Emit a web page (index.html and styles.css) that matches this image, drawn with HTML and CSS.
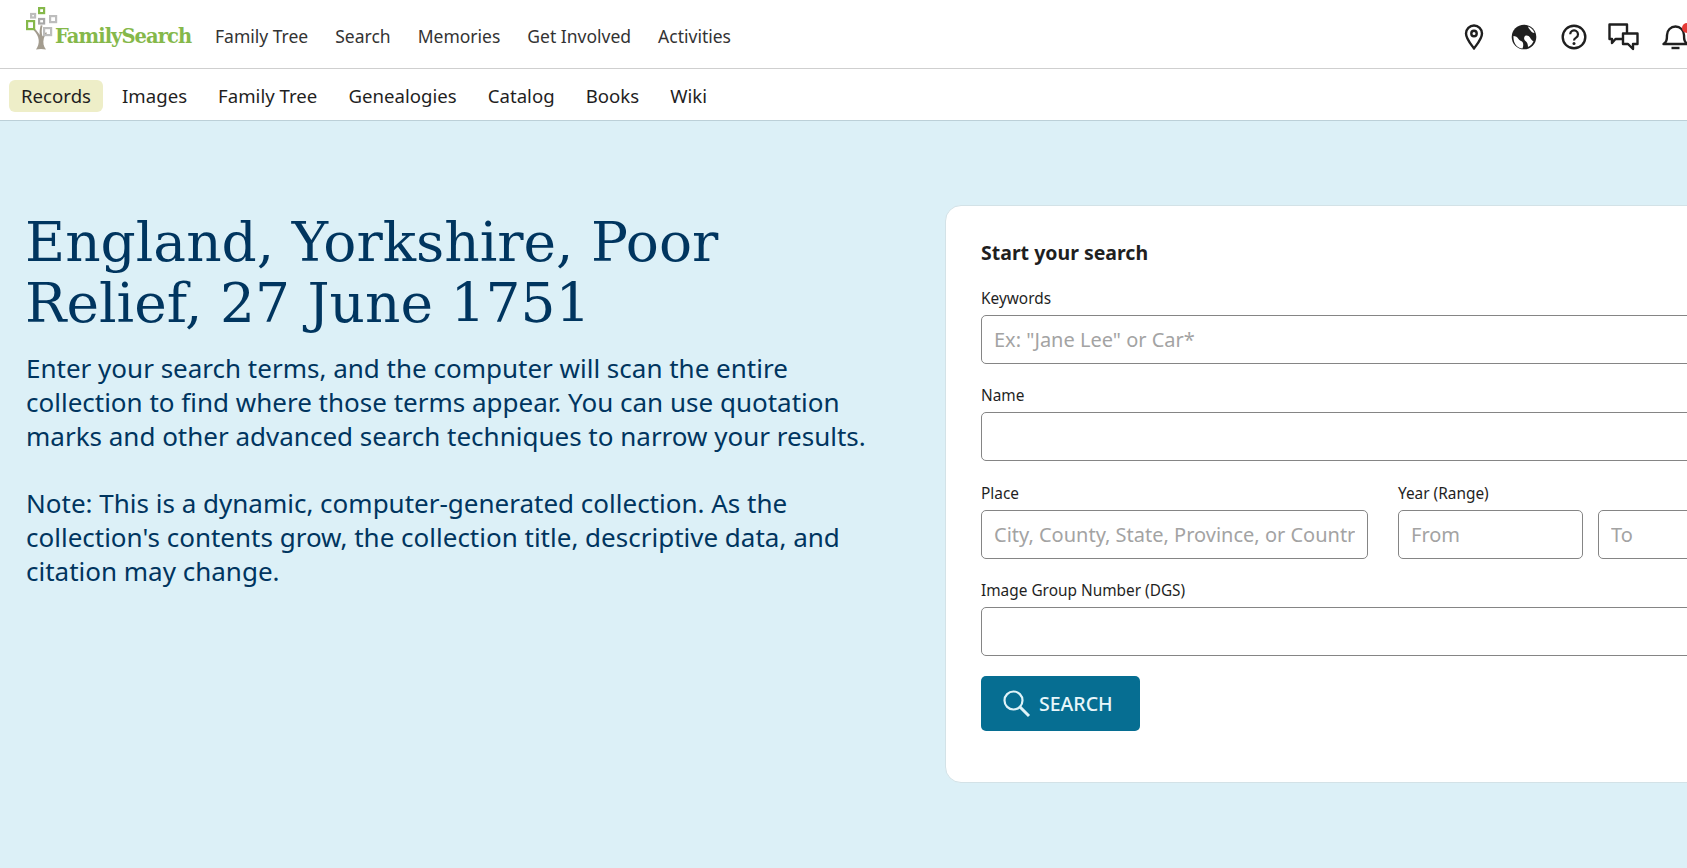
FILE: index.html
```html
<!DOCTYPE html>
<html lang="en">
<head>
<meta charset="utf-8">
<title>England, Yorkshire, Poor Relief, 27 June 1751</title>
<link rel="stylesheet" href="styles.css">
</head>
<body>
<div class="page">
<header class="top">
  <a class="logo">
    <svg class="logo-tree" width="40" height="50" viewBox="0 0 40 50">
      <path d="M11 48.500c3-.8 7-.8 10 0-2.500-3-3.200-7-2.200-11 .6-2.300 1.800-4 3.200-5.500l-1-.8c-1.600 1.300-2.800 2.600-3.600 4.300-.8-3.600-.9-7 .1-11l-1.800-.3c-1 3.600-1.300 6.500-1 9.800-1.300-2.300-3-4.500-5.200-6.500l-1.200 1.200c3.200 3.400 5 6.500 5.400 10.300.3 3.500-.7 6.500-2.700 9.500z" fill="#a39c8f"/>
      <g fill="none" stroke-width="2.200">
        <rect x="2.100" y="20.100" width="7" height="8" stroke="#85b84a"/>
        <rect x="14.100" y="7.100" width="5" height="5" stroke="#85b84a"/>
        <rect x="6.100" y="13" width="4" height="3.500" stroke="#bdbdbd"/>
        <rect x="14.100" y="18" width="5" height="4.500" stroke="#a8a8a8"/>
        <rect x="25.100" y="15.100" width="6" height="6" stroke="#bdbdbd"/>
        <rect x="19.100" y="27.100" width="7" height="7" stroke="#bdbdbd"/>
      </g>
    </svg>
    <span class="logo-text">FamilySearch</span>
  </a>
  <nav class="main-nav">
    <a>Family Tree</a><a>Search</a><a>Memories</a><a>Get Involved</a><a>Activities</a>
  </nav>
  <div class="icons">
    <svg width="28" height="28" viewBox="0 0 28 28" fill="none" stroke="#1f1f1f" stroke-width="2.400"><path d="M14 25.500C10 20 6 15.500 6 10.500a8 8 0 0 1 16 0c0 5-4 9.500-8 15z" stroke-linejoin="round"/><circle cx="14" cy="10.500" r="2.700"/></svg>
    <svg width="28" height="28" viewBox="0 0 28 28"><circle cx="14" cy="14" r="12.300" fill="#1f1f1f"/><path d="M3.500 13c2 0 4 1 5 3s3 1.500 4 3 1 4 0 6.500C7 25 3 20 3.500 13zM15 13c2-1 4 0 5 1.500s2 3.500 3.500 3.500c-1 3-3 5-5.500 6 0-3-1-5-2.500-6s-2-3.500-.5-5zM18 3.500c3 1 5.500 3.500 6.500 6.500-2 0-3-1-4-2.500s-2-2-2.500-4z" fill="#fff"/></svg>
    <svg width="28" height="28" viewBox="0 0 28 28" fill="none" stroke="#1f1f1f" stroke-width="2.400"><circle cx="14" cy="14" r="11.300"/><path d="M10.200 11.300a3.900 3.900 0 1 1 5.900 3.300c-1.300.8-2.100 1.500-2.100 3" stroke-width="2.200"/><circle cx="14" cy="20.500" r="1.500" fill="#1f1f1f" stroke="none"/></svg>
    <svg class="chat" width="31" height="28" viewBox="0 0 31 28" fill="none" stroke="#1f1f1f" stroke-width="2.400" stroke-linejoin="round"><path d="M14 16H7.500L4 20v-4H1.500V1.500H19V10"/><path d="M15 10.500h14.500V21H25v5l-5-5h-5z"/></svg>
    <span class="bell">
      <svg width="30" height="28" viewBox="0 0 30 28" fill="none" stroke="#1f1f1f" stroke-width="2.400" stroke-linejoin="round"><path d="M1.500 21c3-2 3.500-4 3.500-9a8.500 8.500 0 0 1 17 0c0 5 .5 7 3.500 9z"/><path d="M9.500 25h8"/></svg>
      <i class="dot"></i>
    </span>
  </div>
</header>
<nav class="sub-nav">
  <a class="active">Records</a><a>Images</a><a>Family Tree</a><a>Genealogies</a><a>Catalog</a><a>Books</a><a>Wiki</a>
</nav>
<main class="hero">
  <section class="intro">
    <h1>England, Yorkshire, Poor Relief, 27 June 1751</h1>
    <p>Enter your search terms, and the computer will scan the entire collection to find where those terms appear. You can use quotation marks and other advanced search techniques to narrow your results.</p>
    <p class="note">Note: This is a dynamic, computer-generated collection. As the collection's contents grow, the collection title, descriptive data, and citation may change.</p>
  </section>
  <form class="card">
    <h2>Start your search</h2>
    <label class="field">Keywords<input placeholder="Ex: &quot;Jane Lee&quot; or Car*"></label>
    <label class="field">Name<input></label>
    <div class="row">
      <label class="field place">Place<input placeholder="City, County, State, Province, or Country"></label>
      <div class="field years">
        <span>Year (Range)</span>
        <div class="year-inputs"><input placeholder="From"><input placeholder="To"></div>
      </div>
    </div>
    <label class="field">Image Group Number (DGS)<input></label>
    <button type="button" class="search">
      <svg width="30" height="30" viewBox="0 0 30 30" fill="none" stroke="#dff3f8" stroke-width="2.200"><circle cx="11.500" cy="11.500" r="9"/><path d="M18 18l9 9" stroke-width="3"/></svg>
      SEARCH
    </button>
  </form>
</main>
</div>
</body>
</html>
```
FILE: styles.css
```css
* { box-sizing: border-box; }
html, body { margin: 0; height: 100%; overflow: hidden; }
body { font-family: "Noto Sans", sans-serif; color: #1f1f1f; background: #fff; }
.page { width: 1840px; height: 868px; display: flex; flex-direction: column; }
.top { height: 69px; flex: none; display: flex; align-items: center; padding-left: 25px; border-bottom: 1px solid #cfcfcf; }
.logo { width: 190px; height: 50px; display: flex; flex: none; position: relative; margin-top: -17px; }
.logo-tree { position: absolute; left: 0; top: 0; }
.logo-text { position: absolute; left: 30px; top: 24px; font-family: "DejaVu Serif", serif; font-size: 19.500px; font-weight: 700; letter-spacing: -.950px; color: #85b84a; }
.main-nav { display: flex; gap: 27px; font-size: 17.500px; color: #333; margin-top: 3px; }
.icons { position: absolute; left: 1460px; top: 23px; display: flex; align-items: center; gap: 22px; }
.chat { margin-left: -2.500px; margin-right: 1.500px; }
.bell { position: relative; display: block; width: 30px; height: 28px; }
.dot { position: absolute; left: 20px; top: 0; width: 10px; height: 10px; border-radius: 50%; background: #e53935; }
.sub-nav { height: 52px; flex: none; display: flex; align-items: center; padding: 2px 0 0 9px; gap: 7px; border-bottom: 1px solid #bcd0d8; font-size: 18.600px; letter-spacing: .020px; }
.sub-nav a { padding: 4px 12px 5px; border-radius: 6px; line-height: 23px; }
.sub-nav .active { background: #eeeec8; }
.hero { flex: 1; background: #dcf0f7; display: flex; padding: 84px 0 0 25px; align-items: flex-start; }
.intro { width: 920px; flex: none; padding-top: 7px; color: #00355f; }
h1 { margin: 0 0 17px; font-family: "DejaVu Serif", serif; font-weight: 400; font-size: 55px; line-height: 61px; width: 800px; color: #00355f; }
.intro p { margin: 0 0 0 1px; width: 850px; font-size: 26px; line-height: 34px; }
.intro .note { margin-top: 33px; }
.card { width: 880px; height: 578px; flex: none; background: #fff; border: 1px solid #d3e2e7; border-radius: 16px; padding: 34px 35px; }
h2 { margin: 0 0 21px; font-size: 19.500px; font-weight: 700; line-height: 26px; color: #1f1f1f; }
.field { display: block; font-size: 15.400px; line-height: 24px; margin-bottom: 20.300px; }
.field input { display: block; width: 100%; height: 49px; margin-top: 4px; border: 1px solid #858585; border-radius: 5px; padding: 0 12px; font: 20px "Noto Sans", sans-serif; background: #fff; }
input::placeholder { color: #a3a3a3; opacity: 1; }
.row { display: flex; gap: 30px; }
.place { width: 387px; flex: none; }
.years { flex: 1; }
.year-inputs { display: flex; gap: 15px; }
.year-inputs input { width: 185px; }
.search { display: flex; align-items: center; gap: 7px; width: 159px; height: 55px; margin-top: 20.300px; padding: 0 0 0 21px; border: 0; border-radius: 5px; background: #066e92; color: #e8f6fa; font: 500 19.500px "Noto Sans", sans-serif; }
```
